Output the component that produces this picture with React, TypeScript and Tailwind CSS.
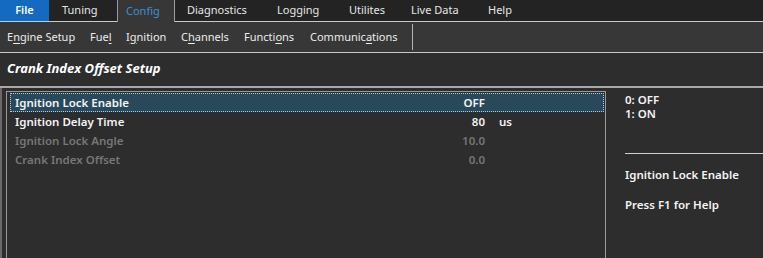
const tabs = [
  { label: 'File', cls: 'w-[49px] justify-center bg-[#1469c0] text-white font-semibold border-b border-[#c8c8c8]' },
  { label: 'Tuning', cls: 'w-[68px] pl-[13px] text-[#e6e6e6] border-b border-[#c8c8c8]' },
  { label: 'Config', cls: 'w-[58px] pl-[8px] text-[#3a8fd6] bg-[#373737] border-l border-r border-[#9a9a9a]' },
  { label: 'Diagnostics', cls: 'w-[90px] pl-[12px] text-[#e6e6e6] border-b border-[#c8c8c8]' },
  { label: 'Logging', cls: 'w-[72px] pl-[12px] text-[#e6e6e6] border-b border-[#c8c8c8]' },
  { label: 'Utilites', cls: 'w-[62px] pl-[12px] text-[#e6e6e6] border-b border-[#c8c8c8]' },
  { label: 'Live Data', cls: 'w-[77px] pl-[12px] text-[#e6e6e6] border-b border-[#c8c8c8]' },
  { label: 'Help', cls: 'w-[50px] pl-[12px] text-[#e6e6e6] border-b border-[#c8c8c8]' },
];

const rows = [
  { name: 'Ignition Lock Enable', value: 'OFF', unit: '', active: true, selected: true },
  { name: 'Ignition Delay Time', value: '80', unit: 'us', active: true, selected: false },
  { name: 'Ignition Lock Angle', value: '10.0', unit: '', active: false, selected: false },
  { name: 'Crank Index Offset', value: '0.0', unit: '', active: false, selected: false },
];

function U({ children }: { children: string }) {
  return <span className="underline underline-offset-2">{children}</span>;
}

export default function App() {
  return (
    <div
      className="w-[763px] h-[258px] overflow-hidden bg-[#2d2d2d] flex flex-col text-[11px]"
      style={{ fontFamily: '"Noto Sans", "Open Sans", sans-serif' }}
    >
      {/* top menu tabs */}
      <div className="h-[22px] flex bg-[#232323] shrink-0">
        {tabs.map((t) => (
          <div key={t.label} className={'flex items-center h-full ' + t.cls}>
            {t.label}
          </div>
        ))}
        <div className="flex-1 border-b border-[#c8c8c8]" />
      </div>

      {/* ribbon */}
      <div className="h-[31px] flex items-center bg-[#373737] border-b border-[#c8c8c8] shrink-0 text-[#ececec] pl-[7px]">
        <span className="w-[83px]">E<U>n</U>gine Setup</span>
        <span className="w-[36px]">Fue<U>l</U></span>
        <span className="w-[55px]">I<U>g</U>nition</span>
        <span className="w-[63px]">C<U>h</U>annels</span>
        <span className="w-[66px]">Functi<U>o</U>ns</span>
        <span className="w-[102px]">Communic<U>a</U>tions</span>
        <div className="w-px h-[26px] bg-[#b4b4b4]" />
      </div>

      {/* page title */}
      <div className="h-[35px] flex items-center pl-[7px] pb-[2px] bg-[#2d2d2d] border-b-2 border-[#a9a9a9] shrink-0">
        <span className="italic font-bold text-white text-[13px]">Crank Index Offset Setup</span>
      </div>

      {/* body */}
      <div className="flex-1 flex pt-[3px] border-l-2 border-[#6a6a6a]">
        <div className="ml-[4px] w-[600px] border-l border-t border-r border-[#9a9a9a] pt-px pl-[3px] pr-px">
          {rows.map((r) => (
            <div
              key={r.name}
              className={
                'h-[19px] flex items-center font-semibold text-[11.5px] ' +
                (r.selected
                  ? 'bg-[#29495a] border border-dotted border-[#9ed2ee] '
                  : 'border border-transparent ') +
                (r.active ? 'text-[#f4f4f4]' : 'text-[#777777]')
              }
            >
              <span className="pl-[4px] w-[420px]">{r.name}</span>
              <span className="w-[54px] text-right">{r.value}</span>
              <span className="pl-[14px]">{r.unit}</span>
            </div>
          ))}
        </div>

        <div className="flex-1 pl-[19px] pt-[2px] font-semibold text-[11.5px] text-[#f4f4f4]">
          <div className="leading-[14px]">0: OFF</div>
          <div className="leading-[14px]">1: ON</div>
          <div className="mt-[32px] h-px bg-[#cfcfcf]" />
          <div className="mt-[12px] leading-[18px]">Ignition Lock Enable</div>
          <div className="mt-[12px] leading-[18px]">Press F1 for Help</div>
        </div>
      </div>
    </div>
  );
}
